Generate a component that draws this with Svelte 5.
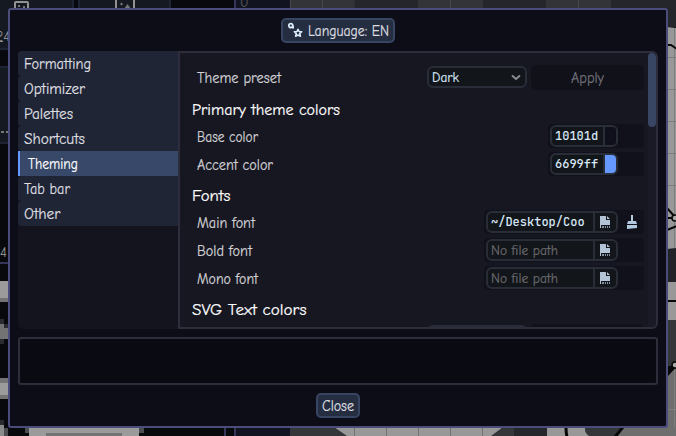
<script>
  const tabs = [
    ['Formatting', 67], ['Optimizer', 61], ['Palettes', 49], ['Shortcuts', 61],
    ['Theming', 50], ['Tab bar', 46], ['Other', 36.5]
  ];
  const colors = [
    { name: 'Base color', width: 61, value: '10101d', fill: '#10101d' },
    { name: 'Accent color', width: 76, value: '6699ff', fill: '#6699ff' }
  ];
  const fonts = [
    { name: 'Main font', width: 58, path: '~/Desktop/Coo' },
    { name: 'Bold font', width: 55, path: '' },
    { name: 'Mono font', width: 61, path: '' }
  ];
  let active = $state('Theming');
</script>

{#snippet label(text, width, size = 15, height = 24, baseline = 18)}
  <svg class="label" {width} {height}><text y={baseline} font-size={size} textLength={width} lengthAdjust="spacingAndGlyphs">{text}</text></svg>
{/snippet}

{#snippet fileIcon()}
  <svg width="12" height="14" viewBox="0 0 12 14"><path fill="#b3c4d6" d="M1 1h6v4h4v5H1zM8 1l3 3H8z"/><path fill="#8493a5" d="M3 11h2v2H3zm3 0h1v2H6zm2 0h1v2H8zm2 0h1v2h-1z"/><path fill="#b3c4d6" d="M1 10h1v3H1z"/></svg>
{/snippet}

<div class="screen">
  <svg class="backdrop" width="676" height="436" aria-hidden="true">
    <path fill="#08090d" d="M0 0h676v436H0z"/>
    <path fill="#1e2433" d="M0 0h74v50H0zM78 0h93v50H78zM0 66h10v78H0z"/>
    <path fill="#151922" d="M0 0h72v48H0zM80 0h89v48H80zM0 68h10v74H0z"/>
    <path fill="none" stroke="#929292" stroke-width="2" d="M15 12V3q0-1 1-1h11q1 0 1 1v9M116 12V0M134 12V0"/>
    <path fill="#777" d="M18 5h2v2h-2zM23 6h2v2h-2zM120 4l1.500-1.500L123 4l-1.500 1.500zM127.500 4l3.500 5h-7z"/>
    <path fill="#777" d="M1 131h3v2H1zM6 131h3v2H6z"/>
    <text x="-4" y="41" font-size="14" fill="#8d8d8d">24</text>
    <path fill="#888" d="M0 41h3v1H0z"/>
    <text x="0" y="257" font-size="14" fill="#929292">4</text>
    <path fill="#36365c" d="M0 262h10v2H0zM234 0h2v10h-2zM224 426h2v10h-2zM234 426h2v10h-2z"/>
    <path fill="#111420" d="M236 0h54v10h-54zM236 426h54v10h-54z"/>
    <text x="240" y="7" font-size="14" fill="#5d5d5d">0</text>
    <path fill="#9b9b9b" d="M0 281h10v17H0zM0 383h10v12H0z"/>
    <path fill="#737373" d="M0 298h10v4H0zM0 324h8v15H0zM0 378h10v5H0zM0 395h10v4H0z"/>
    <path fill="#292b30" d="M0 319h4v5H0zM4 324h4v4H4zM0 339h4v5H0zM0 420h4v5H0z"/>
    <path fill="#8b8b8b" d="M0 425h4v11H0z"/><path fill="#4c4d50" d="M4 428h4v8H4zM25 428h119v5H25z"/>
    <path fill="#9b9b9b" d="M29 426h110v10H29z"/><path fill="#747474" d="M46 433h76v3H46z"/>
    <path fill="#25262b" d="M290 0h386v27H290z"/>
    <path fill="#333438" d="M290 0h64.500v9H290zM418 0h65v9h-65zM546 0h65v9h-65z"/>
    <path fill="#46474b" d="M290 0h1v9h-1zM322 0h1v9h-1zM450 0h1v9h-1zM578 0h1v9h-1z"/>
    <path fill="#989898" d="M667 27l9 1v221l-9 1zM667 282h9v38h-9z"/>
    <path fill="#222328" d="M667 249l9-1v34h-9z"/><path fill="#35363a" d="M667 320h9v46h-9z"/>
    <path fill="#6e6e6e" d="M667 377l9-10v69h-9z"/>
    <path fill="none" stroke="#7d7d7d" d="M674.5 28v220M667 57.500h9M667 89.500h9M667 121.500h9M667 153.500h9M667 185.500h9M667 409.500h9M674.5 366v70"/>
    <path fill="none" stroke="#080808" stroke-width="2" d="M667 45h4l6 4M667 208l8 9M667 218h7M667 230l10-4M667 301h9M667 375l9-9"/>
    <circle cx="675" cy="218" r="3" fill="#aaa" stroke="#080808" stroke-width="1.500"/>
    <circle cx="675" cy="365" r="3" fill="#aaa" stroke="#080808" stroke-width="1.500"/>
    <path fill="#35363a" d="M290 427h224v9H290z"/><path fill="#25262b" d="M514 427h34v9h-34z"/>
    <path fill="#989898" d="M334 427h169l-12 9H347zM547 427h45v9h-45z"/>
    <path fill="#35363a" d="M585 427h50v9h-46q-4-3-4-6z"/><path fill="#6e6e6e" d="M624 427h52v9h-60z"/>
    <path fill="none" stroke="#080808" stroke-width="3" d="M566 427q0 6 1 10M623 427l-8 10"/>
    <path fill="#747474" d="M354 427h1v9h-1zM386 427h1v9h-1zM418 427h1v9h-1zM450 427h1v9h-1zM482 427h1v9h-1z"/>
  </svg>

  <main class="dialog">
    <button class="button language">
      <svg width="16" height="16" viewBox="0 0 16 16" fill="none"><circle cx="3.800" cy="3.600" r="2" stroke="#dcecff" stroke-width="1.800"/><path fill="#dcecff" d="M5 4h2v2.500H5z"/><path stroke="#dcecff" stroke-width="1.600" stroke-linejoin="round" d="M11 7.300l1 2.200 2.700.2-2 1.900.7 2.600-2.400-1.200-2.400 1.200.7-2.600-2-1.900 2.700-.2z"/></svg>
      {@render label('Language: EN', 81)}
    </button>
    <div class="body">
      <nav>
        {#each tabs as [name, width]}
          <button class="tab" class:active={active === name} onclick={() => (active = name)}>{@render label(name, width)}</button>
        {/each}
      </nav>
      <section class="panel">
        <div class="content">
          <div class="row first">
            {@render label('Theme preset', 84)}
            <div class="presets">
              <div class="field dropdown">
                {@render label('Dark', 27, 13.5, 18, 13.5)}
                <svg width="10" height="7" viewBox="0 0 10 7"><path d="M1 1.500 5 5l4-3.500" fill="none" stroke="#8b8d90" stroke-width="2"/></svg>
              </div>
              <button class="apply">{@render label('Apply', 33, 15, 25)}</button>
            </div>
          </div>
          <h2>{@render label('Primary theme colors', 148, 16.5, 34, 25)}</h2>
          {#each colors as color}
            <div class="row">
              {@render label(color.name, color.width)}
              <div class="slot color">
                <div class="field"><code>{color.value}</code><span class="swatch" style:background={color.fill}></span></div>
              </div>
            </div>
          {/each}
          <h2>{@render label('Fonts', 38.5, 16.5, 34, 25)}</h2>
          {#each fonts as font}
            <div class="row">
              {@render label(font.name, font.width)}
              <div class="slot file">
                <div class="field">
                  {#if font.path}<code>{font.path}</code>{:else}<span class="empty">{@render label('No file path', 67, 13.5, 18, 14)}</span>{/if}
                  <span class="browse">{@render fileIcon()}</span>
                </div>
                {#if font.path}
                  <svg class="brush" width="10" height="14" viewBox="0 0 10 14"><path fill="#b3cade" d="M4 0h2v6h3l1 3H0l1-3h3zM0 10h10v3L0 14z"/></svg>
                {/if}
              </div>
            </div>
          {/each}
          <h2>{@render label('SVG Text colors', 114.5, 16.5, 34, 25)}</h2>
          <div class="presets next"><div class="field dropdown"></div><div class="apply"></div></div>
        </div>
        <div class="track"><div class="thumb"></div></div>
      </section>
    </div>
    <div class="info"></div>
    <button class="button close">{@render label('Close', 32)}</button>
  </main>
</div>

<style>
  :global(body) { margin: 0; overflow: hidden; background: #08090d; }
  * { box-sizing: border-box; }
  .screen { position: relative; width: 676px; height: 436px; padding: 8px; overflow: hidden; font-family: "Comic Neue", Lato, "Noto Sans", sans-serif; }
  .backdrop { position: absolute; inset: 0; }
  svg { display: block; flex: none; }
  .label { overflow: visible; fill: currentColor; stroke: currentColor; stroke-width: .2px; }
  button { border: 0; margin: 0; padding: 0; font: inherit; color: inherit; }
  .dialog { position: relative; width: 660px; height: 420px; padding: 8px; border: 2px solid #4c4c7b; border-radius: 3px; background: #0d0d18; display: flex; flex-direction: column; align-items: center; color: #dedee0; }
  .button { height: 25px; flex: none; display: flex; align-items: flex-start; border: 2px solid #374563; border-radius: 5px; background: #252e40; }
  .button .label { margin-top: -2px; }
  .language { width: 114px; padding-left: 4px; gap: 5px; }
  .language > svg:first-child { margin-top: 2px; }
  .body { width: 640px; height: 278px; margin-top: 8px; display: flex; }
  nav { width: 160px; background: #14141f; border-radius: 5px 0 0 5px; }
  .tab { display: flex; align-items: flex-start; width: 160px; height: 25px; padding-left: 6px; border-radius: 4px 0 0 4px; background: #1f2535; }
  .tab.active { background: #384868; border-left: 2px solid #6699ff; padding-left: 8px; border-radius: 0; color: #fff; }
  .panel { flex: 1; display: flex; overflow: hidden; border: 2px solid #2d2d3b; border-radius: 0 6px 6px 0; background: #171722; }
  .content { width: 468px; flex: none; padding: 0 4px 0 12px; }
  .row { height: 24px; margin-bottom: 4px; padding-left: 4.500px; display: flex; justify-content: space-between; align-items: flex-start; color: #d2d2d5; }
  .row.first { height: 25px; margin: 12px 0 0; }
  .row:has(+ h2) { margin-bottom: 0; }
  h2 { height: 34px; margin: 0; font-weight: 400; color: #fff; }
  .presets { display: flex; gap: 4px; }
  .next { justify-content: flex-end; }
  .field { display: flex; height: 22px; border: 2px solid #292d38; border-radius: 6px; background: #121519; color: #d8e8f8; overflow: hidden; }
  .dropdown { width: 100px; margin-top: 1px; padding: 0 4px 0 3px; align-items: center; justify-content: space-between; }
  .apply { width: 113px; height: 25px; display: flex; justify-content: center; border-radius: 5px; background: #11111a; color: #707077; }
  .slot { height: 24px; padding: 1px 2px; display: flex; align-items: center; border-radius: 4px; background: #11111b; }
  .color { width: 96px; }
  .file { width: 160px; }
  .color .field { width: 68px; }
  .file .field { width: 132px; }
  code { flex: 1; padding-left: 3px; font: 500 12px/18px "JetBrains Mono", "DejaVu Sans Mono", monospace; white-space: nowrap; }
  .swatch { width: 13px; border-left: 2px solid #292d38; }
  .empty { flex: 1; padding-left: 3px; color: #68696d; }
  .browse { width: 23px; padding: 2px 0 0 4px; border-left: 2px solid #292d38; }
  .brush { margin-left: 9px; }
  .track { width: 8px; flex: none; background: #1a1a26; }
  .thumb { height: 74px; border-radius: 4px; background: #384563; }
  .info { width: 640px; height: 48px; flex: none; margin: 8px 0; border: 2px solid #2d2d3b; border-radius: 3px; background: #0a0a13; }
  .close { width: 44px; padding-left: 4px; }
</style>
